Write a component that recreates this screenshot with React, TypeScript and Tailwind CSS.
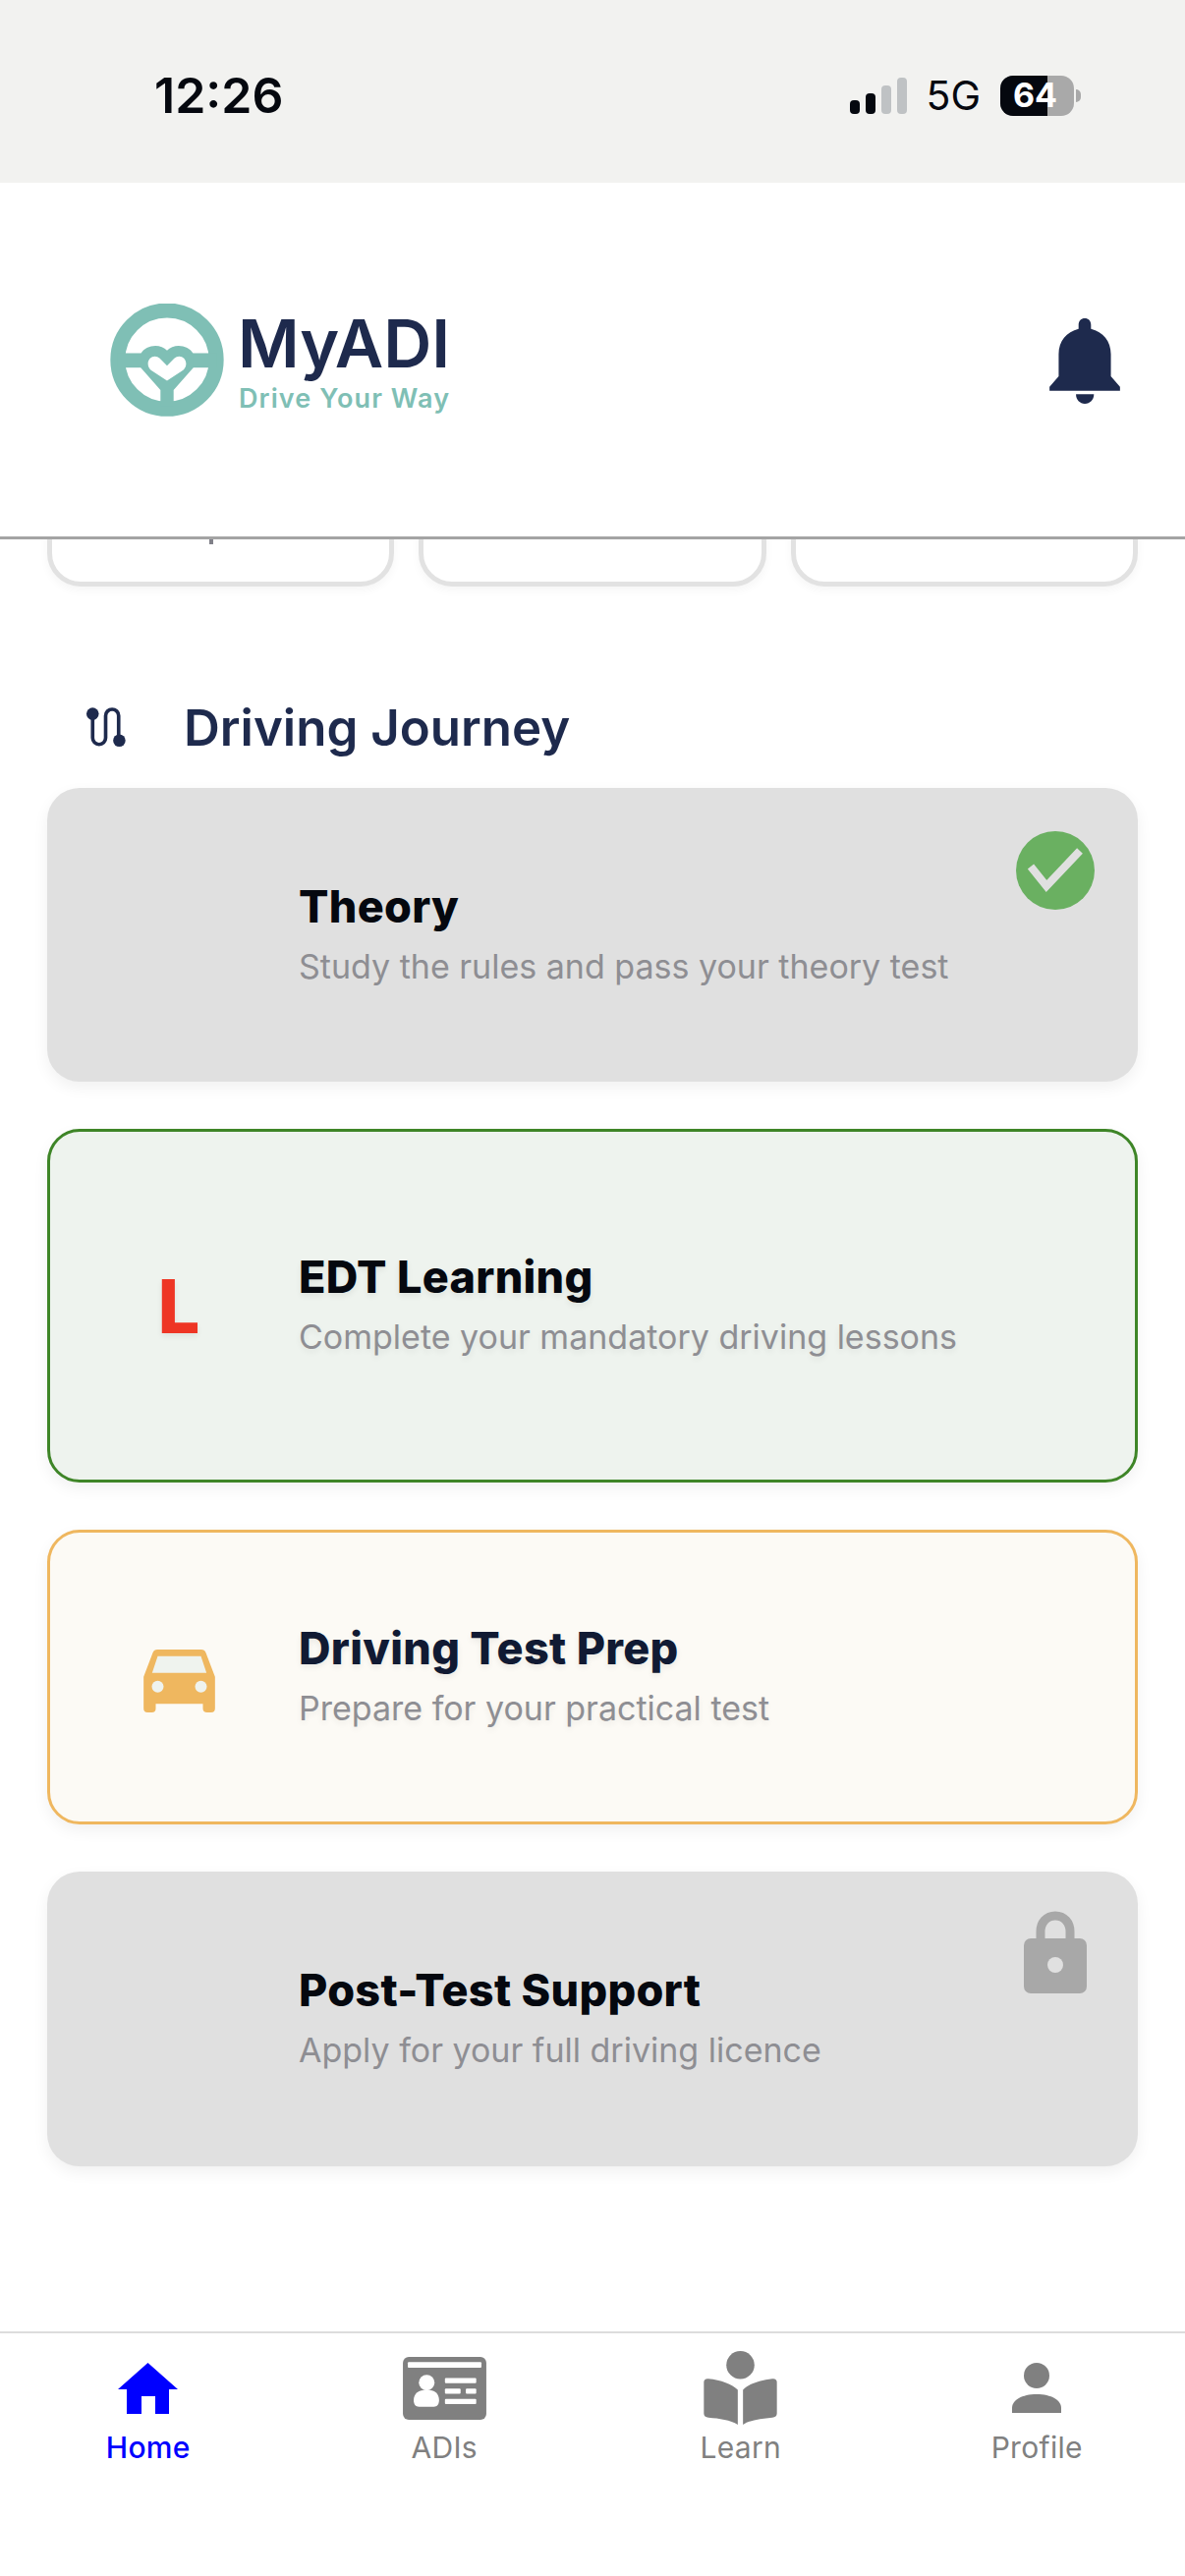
import React from 'react'

const navy = '#1e2a4d'

function Logo() {
  return (
    <div className="flex items-start">
      <svg viewBox="157 87 346 344" className="w-[116px] h-[115px] mr-[14px]">
        <circle cx="330" cy="258" r="150" fill="none" stroke="#7fbfb5" strokeWidth="45" />
        <rect x="180" y="238" width="300" height="44" fill="#7fbfb5" />
        <path d="M250 240C265 212 310 208 330 230C350 208 395 212 410 240V282L350 350V400H310V350L250 282Z" fill="#7fbfb5" />
        <path d="M330 276L352 254C366 240 388 250 388 270C388 279 384 285 379 290L330 322L281 290C276 285 272 279 272 270C272 250 294 240 308 254Z" fill="#fff" />
      </svg>
      <div className="flex flex-col mt-[7px]">
        <span className="text-[68px] leading-[66px] font-semibold text-[#1e2a4d]">MyADI</span>
        <span className="text-[27px] leading-[30px] font-semibold tracking-[1.1px] text-[#7fbfb5] mt-[9px] ml-[1px]">Drive Your Way</span>
      </div>
    </div>
  )
}

function StatusBar() {
  return (
    <div className="h-[186px] bg-[#f2f2f0] flex items-center justify-between pl-[157px] pr-[106px] pt-[8px]">
      <span className="text-[50px] leading-none font-semibold text-[#05080f]">12:26</span>
      <div className="flex items-center">
        <div className="flex items-end gap-[6px] mr-[19px] h-[37px]">
          <div className="w-[10px] h-[14px] rounded-[4px] bg-[#05080f]" />
          <div className="w-[10px] h-[21px] rounded-[4px] bg-[#05080f]" />
          <div className="w-[10px] h-[29px] rounded-[4px] bg-[#bfc2c4]" />
          <div className="w-[10px] h-[37px] rounded-[4px] bg-[#bfc2c4]" />
        </div>
        <span className="text-[41px] leading-none font-normal text-[#05080f] mr-[20px]">5G</span>
        <div className="relative w-[75px] h-[41px] rounded-[13px] overflow-hidden bg-[#a9a9a9] flex">
          <div className="w-[48px] bg-[#05080f]" />
          <span className="absolute inset-0 flex items-center justify-start pl-[13px] text-[34px] leading-none font-bold text-white">64</span>
        </div>
        <div className="w-[5px] h-[13px] ml-[2px] rounded-r-full bg-[#a9a9a9]" />
      </div>
    </div>
  )
}

function Bell() {
  return (
    <svg viewBox="54 40 216 262" className="w-[72px] h-[87px]" fill={navy}>
      <path d="M162 40C173 40 181 48 181 60V72C218 82 242 108 242 150V218L270 250V262H54V250L82 218V150C82 108 106 82 143 72V60C143 48 151 40 162 40Z" />
      <path d="M135 273H190C190 290 178 302 162 302C147 302 135 290 135 273Z" />
    </svg>
  )
}

function Header() {
  return (
    <div className="h-[363px] bg-white border-b-[3px] border-[#a4a4a4] flex items-center justify-between pl-[112px] pr-[66px] relative z-10">
      <Logo />
      <div className="mt-[3px]"><Bell /></div>
    </div>
  )
}

function RoadIcon() {
  return (
    <svg viewBox="80 90 130 125" className="w-[43px] h-[42px]" fill="none">
      <path d="M102 112V186A20 20 0 0 0 142 186V118A20 20 0 0 1 182 118V194" stroke={navy} strokeWidth="11" />
      <circle cx="102" cy="112" r="19" fill={navy} />
      <circle cx="184" cy="194" r="19" fill={navy} />
    </svg>
  )
}

function CarIcon() {
  return (
    <svg viewBox="50 42 218 192" className="w-[73px] h-[64px]">
      <path fill="#efb75f" d="M92 42H226Q236 42 240 52L268 125V222Q268 234 256 234H244Q231 234 231 222V208H87V222Q87 234 75 234H62Q50 234 50 222V125L78 52Q82 42 92 42Z" />
      <path fill="#eff3ee" d="M93 62L76 113H242L225 62Z" />
      <circle cx="93" cy="155" r="18" fill="#eff3ee" />
      <circle cx="225" cy="155" r="18" fill="#eff3ee" />
    </svg>
  )
}

function CheckBadge() {
  return (
    <svg viewBox="0 0 80 80" className="w-[80px] h-[80px]">
      <circle cx="40" cy="40" r="40" fill="#6ab061" />
      <path d="M15 36L31 56L65 20" fill="none" stroke="#e0e0e0" strokeWidth="8" />
    </svg>
  )
}

function LockIcon() {
  return (
    <svg viewBox="0 0 64 84" className="w-[64px] h-[84px]">
      <path d="M17 30V21C17 12 23 5 32 5C41 5 47 12 47 21V30" fill="none" stroke="#a8a8a8" strokeWidth="9" />
      <rect x="0" y="28" width="64" height="56" rx="7" fill="#a8a8a8" />
      <circle cx="32" cy="55" r="8" fill="#e0e0e0" />
    </svg>
  )
}

const HomeIcon = () => (
  <svg viewBox="0 0 61 52" className="w-[61px] h-[52px]" fill="#0000ff">
    <path d="M30.5 0L61 27H52V52H38V34H24V52H9V27H0Z" />
  </svg>
)

const AdiIcon = () => (
  <svg viewBox="87 57 256 193" className="w-[85px] h-[64px]">
    <rect x="87" y="57" width="256" height="193" rx="18" fill="#808080" />
    <g fill="#fff">
      <rect x="102" y="73" width="226" height="17" rx="3" />
      <circle cx="160" cy="136" r="24" />
      <path d="M120 190C120 170 135 158 160 158C185 158 198 170 198 190C198 203 192 210 182 210H136C126 210 120 203 120 190Z" />
      <rect x="216" y="122" width="96" height="16" rx="3" />
      <rect x="216" y="154" width="48" height="16" rx="3" />
      <rect x="280" y="154" width="32" height="16" rx="3" />
      <rect x="216" y="186" width="96" height="16" rx="3" />
    </g>
  </svg>
)

const LearnIcon = () => (
  <svg viewBox="1008 39 224 226" className="w-[75px] h-[75px]" fill="#808080">
    <circle cx="1120" cy="82" r="43" />
    <path d="M1008 135C1008 127 1013 123 1022 124C1060 128 1095 140 1112 158V265C1090 250 1055 246 1022 243C1013 242 1008 238 1008 230Z" />
    <path d="M1232 135C1232 127 1227 123 1218 124C1180 128 1145 140 1128 158V265C1150 250 1185 246 1218 243C1227 242 1232 238 1232 230Z" />
  </svg>
)

const ProfileIcon = () => (
  <svg viewBox="0 0 50 51" className="w-[50px] h-[51px]" fill="#808080">
    <circle cx="25" cy="13" r="13" />
    <path d="M0 51V46C0 38 10 32 25 32C40 32 50 38 50 46V51Z" />
  </svg>
)

const navItems = [
  { label: 'Home', icon: <HomeIcon />, active: true },
  { label: 'ADIs', icon: <AdiIcon />, active: false },
  { label: 'Learn', icon: <LearnIcon />, active: false },
  { label: 'Profile', icon: <ProfileIcon />, active: false },
]

function JourneyCard({ title, subtitle, className, titleClass, icon, badge, soft }: {
  title: string
  subtitle: string
  className: string
  titleClass?: string
  icon?: React.ReactNode
  badge?: React.ReactNode
  soft?: boolean
}) {
  const shadow = soft ? '[text-shadow:0_3px_6px_rgba(0,0,0,0.07)]' : ''
  return (
    <div className={`relative rounded-[33px] border-[3px] flex items-center pl-[93px] shadow-[0_6px_16px_rgba(0,0,0,0.06)] ${className}`}>
      <div className="w-[76px] mr-[84px] flex justify-center">{icon}</div>
      <div className={`flex flex-col mb-[4px] ${shadow}`}>
        <span className={`text-[45px] leading-[54px] font-extrabold tracking-[0.3px] ${titleClass ?? 'text-[#05080f]'}`}>{title}</span>
        <span className="text-[34px] leading-[40px] mt-[14px] text-[#8e8e93]">{subtitle}</span>
      </div>
      {badge}
    </div>
  )
}

export default function App() {
  return (
    <div className="w-[1206px] h-[2622px] bg-white flex flex-col overflow-hidden font-[Inter,sans-serif]">
      <StatusBar />
      <Header />

      {/* Scrolled content, the stat cards are cut off by the header */}
      <div className="flex-1 px-[48px]">
        <div className="flex gap-[25px] h-[48px] items-end">
          {[0, 1, 2].map(i => (
            <div key={i} className="relative flex-1 h-[100px] rounded-[34px] border-[5px] border-[#e2e2e2] bg-white shadow-[0_4px_10px_rgba(0,0,0,0.04)]">
              {i === 0 && <div className="absolute left-[160px] top-[47px] w-[4px] h-[5px] bg-[#808088]" />}
            </div>
          ))}
        </div>

        <div className="flex items-center mt-[117px] h-[52px] mb-[36px]">
          <div className="ml-[39px] mr-[57px] flex"><RoadIcon /></div>
          <h2 className="text-[51px] leading-none font-semibold text-[#1e2a4d]">Driving Journey</h2>
        </div>

        <div className="flex flex-col gap-[48px]">
          <JourneyCard
            title="Theory"
            subtitle="Study the rules and pass your theory test"
            className="h-[299px] bg-[#e0e0e0] border-transparent"
            badge={<div className="absolute right-[41px] top-[41px] flex"><CheckBadge /></div>}
          />
          <JourneyCard
            title="EDT Learning"
            subtitle="Complete your mandatory driving lessons"
            className="h-[360px] bg-[#eef3ee] border-[#3e8527]"
            icon={<span className="text-[76px] leading-none font-extrabold text-[#ee3524] [text-shadow:0_3px_6px_rgba(0,0,0,0.07)]">L</span>}
            soft
          />
          <JourneyCard
            title="Driving Test Prep"
            subtitle="Prepare for your practical test"
            className="h-[300px] bg-[#fcfaf5] border-[#efb75f]"
            titleClass="text-[#111a33]"
            icon={<div className="flex mt-[8px]"><CarIcon /></div>}
            soft
          />
          <JourneyCard
            title="Post-Test Support"
            subtitle="Apply for your full driving licence"
            className="h-[300px] bg-[#e0e0e0] border-transparent"
            badge={<div className="absolute right-[49px] top-[37px] flex"><LockIcon /></div>}
          />
        </div>
      </div>

      {/* Bottom tabs */}
      <nav className="h-[249px] border-t-[2px] border-[#dcdcdc] grid grid-cols-4 pt-[18px] bg-white">
        {navItems.map(item => (
          <div key={item.label} className="flex flex-col items-center">
            <div className="h-[75px] flex items-center justify-center">{item.icon}</div>
            <span className={`mt-[5px] text-[30px] leading-[36px] tracking-[0.3px] ${item.active ? 'font-medium text-[#0000ff]' : 'text-[#808080]'}`}>
              {item.label}
            </span>
          </div>
        ))}
      </nav>
    </div>
  )
}
